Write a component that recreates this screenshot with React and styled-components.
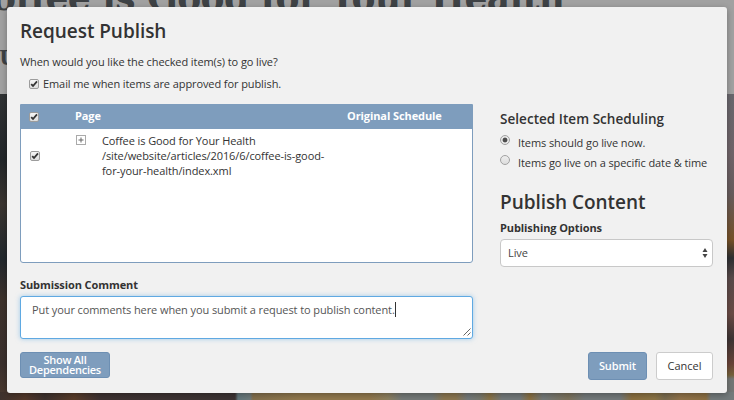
import React from 'react';
import styled, { createGlobalStyle, css } from 'styled-components';

const GlobalStyle = createGlobalStyle`
  * { box-sizing: border-box; }
  html, body { margin: 0; padding: 0; overflow: hidden; }
  body { font-family: "Open Sans", sans-serif; font-size: 11px; color: #333; letter-spacing: -.09px; }
  h1, h2, h3, p { margin: 0; }
`;

const Page = styled.div`
  position: relative;
  width: 734px;
  height: 400px;
  overflow: hidden;
  background: #a1a1a1;
`;

const Article = styled.div`
  display: flex;
  flex-direction: column;
  height: 400px;
`;

const ArticleHead = styled.header`
  flex: 0 0 94px;
  height: 94px;
  overflow: hidden;
  color: #3e4245;
  font-family: "DejaVu Serif", serif;
  font-weight: 700;
  white-space: nowrap;
`;

const ArticleTitle = styled.h1`
  margin: -24px 0 0 -36px;
  font-size: 36px;
  line-height: 42px;
  letter-spacing: -.55px;
`;

const Byline = styled.p`
  margin: 28px 0 0 -10px;
  font-size: 20px;
  line-height: 24px;
`;

const Photo = styled.div`
  display: grid;
  grid-template-columns: 726px 8px;
  grid-template-rows: 298px 8px;
`;

const PhotoLeft = styled.div`
  background-image: linear-gradient(180deg, #303234 0, #222629 65px, #3a3530 110px, #22282d 165px, #3d322c 205px, #3a302d 270px, #48382f 298px);
`;

const PhotoRight = styled.div`
  background-image: linear-gradient(180deg, #69676d 0, #706469 60px, #675c5d 100px, #765128 146px, #2e3033 164px, #594a4a 184px, #6a4b45 220px, #3d3434 245px, #694338 270px, #76613b 281px, #737675 285px);
`;

const PhotoBottom = styled.div`
  grid-column: 1 / 3;
  background-image: linear-gradient(90deg, #3e322d 0, #54392b 25px, #3e322f 45px, #5a3d2a 74px, #3f3332 100px, #3d3434 235px, #63777c 238px, #6f7b7c 250px, #84704d 253px, #92794e 300px, #92794e 370px, #8d8060 388px, #757a78 402px, #757a78 432px, #8b7650 444px, #8b7650 456px, #747a7b 468px, #78796e 480px, #8b7447 490px, #747a7b 502px, #747a7b 520px, #8b7040 530px, #747a7b 543px, #7d735c 568px, #747a7b 585px, #747a7b 620px, #8c7040 632px, #8c7546 655px, #7a6c50 665px, #91734a 680px, #8d7043 706px, #737a7b 711px, #737a7b 734px);
`;

const Modal = styled.main`
  position: absolute;
  inset: 7px;
  display: grid;
  grid-template-columns: 453px 213px;
  column-gap: 27px;
  grid-template-rows: 97px 248px 28px;
  padding: 0 13px;
  background: #f1f1f1;
  border-radius: 3px;
  box-shadow: 0 2px 6px rgba(0, 0, 0, .3);
`;

const Heading = styled.header`
  grid-column: 1 / 3;
`;

const Title = styled.h1`
  padding-top: ${p => p.$top || 0}px;
  font-size: 19px;
  line-height: 28px;
  font-weight: 600;
  letter-spacing: -.05px;
  white-space: nowrap;
`;

const Line = styled.p`
  padding-top: ${p => p.$top || 0}px;
  line-height: 16px;
  white-space: nowrap;
`;

const EmailOption = styled.label`
  display: flex;
  align-items: center;
  gap: 4px;
  padding: 6px 0 0 9px;
  white-space: nowrap;
`;

const CheckBox = styled.span`
  display: block;
  flex: none;
  width: 10px;
  height: 10px;
  background: linear-gradient(#f5f5f5, #ddd);
  border: 1px solid #9c9c9c;
  border-radius: 2px;
  svg { display: block; width: 8px; height: 8px; }
`;

const Column = styled.section`
  min-width: 0;
`;

const ItemsTable = styled.div`
  height: 159px;
  background: #fff;
  border: 1px solid #7e9dbd;
  border-radius: 0 0 3px 3px;
`;

const TableHead = styled.div`
  display: flex;
  align-items: center;
  height: 24px;
  padding-left: 8px;
  background: #7e9dbd;
  color: #fff;
  font-weight: 700;
`;

const HeadLabel = styled.span`
  width: ${p => p.$width}px;
  margin: -2px 0 0 ${p => p.$left || 0}px;
  line-height: 16px;
  white-space: nowrap;
`;

const TableRow = styled.div`
  display: grid;
  grid-template-columns: 10px 10px auto;
  align-items: center;
  height: 53px;
  padding-left: 9px;
`;

const Expander = styled.svg`
  display: block;
  align-self: start;
  margin: 6px 0 0 36px;
`;

const ItemText = styled.div`
  align-self: start;
  padding: 4px 0 0 52px;
  line-height: 15px;
  white-space: nowrap;
`;

const FieldLabel = styled.div`
  margin-top: ${p => p.$top || 0}px;
  height: 16px;
  line-height: 16px;
  font-weight: 700;
  white-space: nowrap;
`;

const CommentBox = styled.div`
  position: relative;
  height: 43px;
  margin-top: 3px;
  padding: 5px 11px;
  background: #fff;
  border: 1px solid #5fa9e2;
  border-radius: 3px;
  box-shadow: 0 0 5px rgba(95, 169, 226, .55);
  color: #555;
  line-height: 16px;
  white-space: nowrap;
`;

const CommentText = styled.span`
  display: inline-block;
  height: 15px;
  line-height: 15px;
  border-right: 1px solid #333;
`;

const ResizeGrip = styled.svg`
  position: absolute;
  right: 1px;
  bottom: 2px;
`;

const SectionTitle = styled.h2`
  margin-top: 5px;
  font-size: 13.5px;
  line-height: 20px;
  font-weight: 600;
  letter-spacing: .04px;
  white-space: nowrap;
`;

const RadioGroup = styled.div`
  padding-top: 4px;
`;

const RadioRow = styled.label`
  display: flex;
  gap: 8px;
  height: 20px;
  padding-top: 2px;
`;

const Radio = styled.span`
  flex: none;
  width: 10px;
  height: 10px;
  border: 1px solid #a2a2a2;
  border-radius: 50%;
  background: ${p => p.$checked
    ? 'radial-gradient(circle, #4c4c4c 0 2px, #e8e8e8 2.8px)'
    : 'linear-gradient(#eee, #ddd)'};
`;

const SelectBox = styled.div`
  display: flex;
  align-items: center;
  justify-content: space-between;
  height: 28px;
  margin-top: 3px;
  padding: 0 4px 1px 7px;
  background: #fff;
  border: 1px solid #c8c8c8;
  border-radius: 4px;
  color: #444;
`;

const primary = css`
  background: #7e9dbd;
  border-color: #6d8fb3;
  color: #fff;
  font-weight: 600;
`;

const Button = styled.button`
  width: ${p => p.$width}px;
  height: ${p => p.$height || 28}px;
  padding: 0;
  background: #fff;
  border: 1px solid #ccc;
  border-radius: 3px;
  color: #333;
  font: 400 11px/${p => p.$line || 16}px "Open Sans", sans-serif;
  letter-spacing: ${p => p.$spacing || 0}px;
  ${p => p.$primary && primary}
`;

const Actions = styled.div`
  display: flex;
  justify-content: flex-end;
  gap: 9px;
`;

const Check = () => (
  <CheckBox>
    <svg viewBox="0 0 8 8"><path d="M1.2 4.2 3 6 7 1.3" fill="none" stroke="#333" strokeWidth="1.8" /></svg>
  </CheckBox>
);

export default function App() {
  return (
    <Page>
      <GlobalStyle />
      <Article>
        <ArticleHead>
          <ArticleTitle>Coffee is Good for Your Health</ArticleTitle>
          <Byline>JU</Byline>
        </ArticleHead>
        <Photo>
          <PhotoLeft />
          <PhotoRight />
          <PhotoBottom />
        </Photo>
      </Article>
      <Modal>
        <Heading>
          <Title $top={10}>Request Publish</Title>
          <Line $top={9}>When would you like the checked item(s) to go live?</Line>
          <EmailOption>
            <Check />
            <Line>Email me when items are approved for publish.</Line>
          </EmailOption>
        </Heading>
        <Column>
          <ItemsTable>
            <TableHead>
              <Check />
              <HeadLabel $left={36} $width={272}>Page</HeadLabel>
              <HeadLabel>Original Schedule</HeadLabel>
            </TableHead>
            <TableRow>
              <Check />
              <Expander width="10" height="10" viewBox="0 0 10 10">
                <rect x=".5" y=".5" width="9" height="9" fill="#fff" stroke="#aaa" />
                <path d="M2.5 5h5M5 2.5v5" stroke="#666" fill="none" />
              </Expander>
              <ItemText>
                <div>Coffee is Good for Your Health</div>
                <div>/site/website/articles/2016/6/coffee-is-good-</div>
                <div>for-your-health/index.xml</div>
              </ItemText>
            </TableRow>
          </ItemsTable>
          <FieldLabel $top={14}>Submission Comment</FieldLabel>
          <CommentBox>
            <CommentText>Put your comments here when you submit a request to publish content.</CommentText>
            <ResizeGrip width="8" height="8" viewBox="0 0 8 8">
              <path d="M.5 7.5l7-7M4.5 7.5l3-3" stroke="#555" strokeWidth=".9" />
            </ResizeGrip>
          </CommentBox>
        </Column>
        <Column>
          <SectionTitle>Selected Item Scheduling</SectionTitle>
          <RadioGroup>
            <RadioRow>
              <Radio $checked />
              <Line>Items should go live now.</Line>
            </RadioRow>
            <RadioRow>
              <Radio />
              <Line>Items go live on a specific date &amp; time</Line>
            </RadioRow>
          </RadioGroup>
          <Title $top={15}>Publish Content</Title>
          <FieldLabel $top={4}>Publishing Options</FieldLabel>
          <SelectBox>
            Live
            <svg width="6" height="10" viewBox="0 0 6 10">
              <path d="M.5 4 3 0l2.5 4zM.5 6 3 10l2.5-4z" fill="#444" />
            </svg>
          </SelectBox>
        </Column>
        <div>
          <Button $primary $width={90} $height={26} $line={10} $spacing={-0.25}>Show All<br />Dependencies</Button>
        </div>
        <Actions>
          <Button $primary $width={59} $spacing={-0.1}>Submit</Button>
          <Button $width={57}>Cancel</Button>
        </Actions>
      </Modal>
    </Page>
  );
}
